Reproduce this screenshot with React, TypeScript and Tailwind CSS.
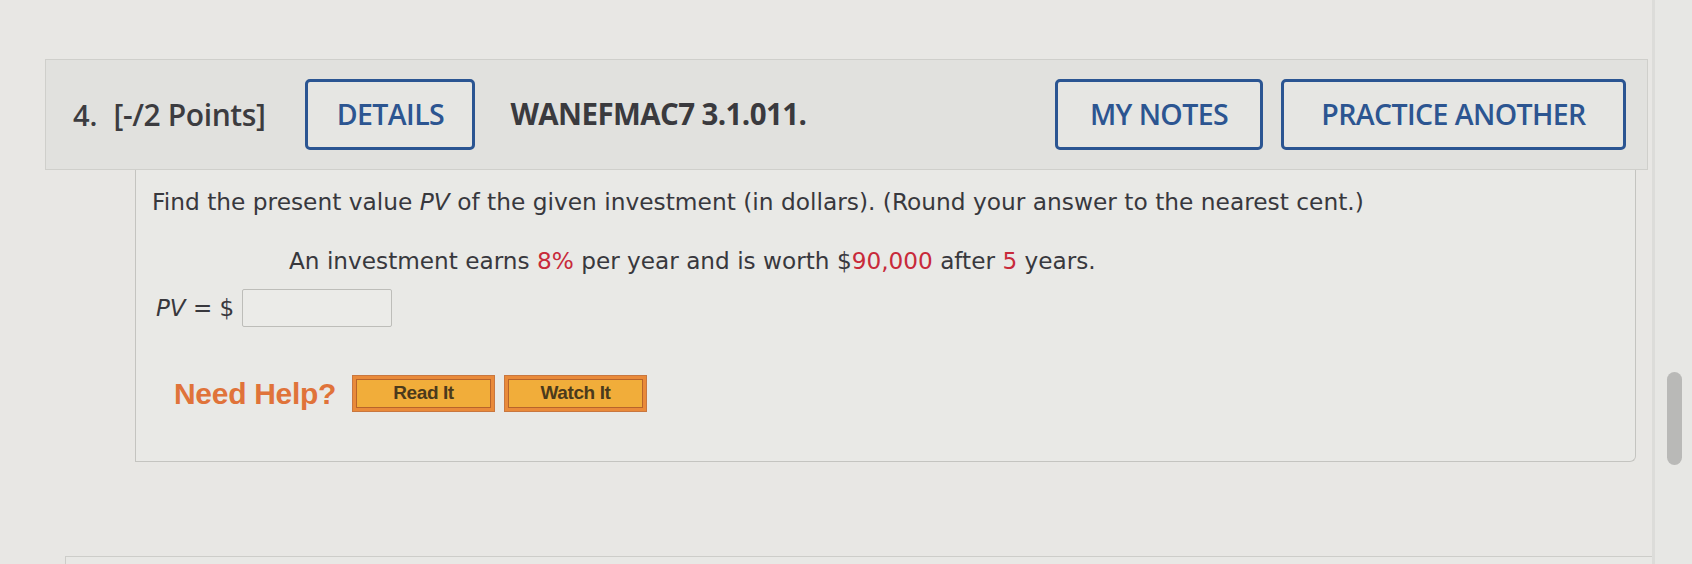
import React from 'react';

const headerFont = { fontFamily: '"Open Sans", "Noto Sans", sans-serif' };
const bodyFont = { fontFamily: '"DejaVu Sans", Verdana, sans-serif' };
const helpFont = { fontFamily: '"Liberation Sans", Arial, sans-serif' };

function OutlineButton({ label, width }: { label: string; width: string }) {
  return (
    <div
      className={`flex h-[71px] items-center justify-center rounded-[5px] border-[3px] border-[#2b5592] bg-[#e6e6e3] text-[28.5px] font-semibold tracking-[-0.6px] text-[#2c5591] ${width}`}
    >
      {label}
    </div>
  );
}

function HelpButton({ label }: { label: string }) {
  return (
    <div className="flex h-[37px] w-[143px] items-center justify-center border border-[#c9773f] bg-[#e98a3a] p-[3px]">
      <div className="flex h-full w-full items-center justify-center border border-[#b8642a] bg-[#f1ad3a] text-[19px] font-bold tracking-[-0.4px] text-[#4b3a1c]">
        {label}
      </div>
    </div>
  );
}

export default function App() {
  return (
    <div className="flex h-[564px] w-[1692px] overflow-hidden bg-[#e8e7e4]">
      <div className="flex w-[1652px] flex-col">
        {/* question header */}
        <div className="ml-[45px] mt-[59px] flex h-[111px] w-[1603px] items-center border border-[#cfcfcb] bg-[#e1e1de] pl-[27px] pr-[21px]" style={headerFont}>
          <span className="text-[29px] font-semibold text-[#3c3c40]">4.</span>
          <span className="ml-[16px] text-[30px] font-semibold tracking-[-0.4px] text-[#3c3c40]">[-/2 Points]</span>
          <div className="ml-[40px]">
            <OutlineButton label="DETAILS" width="w-[170px]" />
          </div>
          <span className="ml-[35px] text-[29.5px] font-bold tracking-[-0.6px] text-[#3a3a3e]">WANEFMAC7 3.1.011.</span>
          <div className="ml-auto flex gap-[18px]">
            <OutlineButton label="MY NOTES" width="w-[208px]" />
            <OutlineButton label="PRACTICE ANOTHER" width="w-[345px]" />
          </div>
        </div>

        {/* question body */}
        <div className="ml-[135px] h-[292px] w-[1501px] rounded-br-[6px] border-x border-b border-[#c4c4c0] bg-[#e9e9e6] pl-[16px]" style={bodyFont}>
          <p className="mt-[18px] text-[23.3px] leading-[28px] text-[#38383d]">
            Find the present value <i>PV</i> of the given investment (in dollars). (Round your answer to the nearest cent.)
          </p>
          <p className="ml-[137px] mt-[31px] text-[23.2px] leading-[28px] text-[#38383d]">
            An investment earns <span className="text-[#c82a3a]">8%</span> per year and is worth $<span className="text-[#c82a3a]">90,000</span> after <span className="text-[#c82a3a]">5</span> years.
          </p>
          <div className="ml-[4px] mt-[14px] flex items-center">
            <span className="text-[23px] leading-[28px] text-[#38383d]">
              <i>PV</i> = $
            </span>
            <div className="ml-[8px] h-[38px] w-[150px] rounded-[2px] border border-[#bdbdb9] bg-[#ebebe8]" />
          </div>
          <div className="ml-[22px] mt-[44px] flex items-center" style={helpFont}>
            <span className="text-[30px] font-bold tracking-[-0.3px] text-[#e0733a]">Need Help?</span>
            <div className="ml-[16px] flex gap-[9px]">
              <HelpButton label="Read It" />
              <HelpButton label="Watch It" />
            </div>
          </div>
        </div>

        {/* next question panel */}
        <div className="ml-[65px] mt-[94px] h-[20px] flex-1 border-l border-t border-[#cdcdc9] bg-[#e8e8e5]" />
      </div>

      {/* scrollbar track */}
      <div className="flex w-[40px] border-l-[3px] border-[#dcdcd9] bg-[#e7e7e4] pl-[12px] pt-[372px]">
        <div className="h-[93px] w-[15px] rounded-full bg-[#b9b9b7]" />
      </div>
    </div>
  );
}
